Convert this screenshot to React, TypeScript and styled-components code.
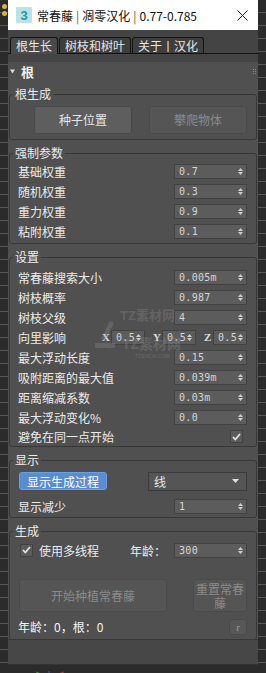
import React from "react";
import styled, { createGlobalStyle } from "styled-components";

const GlobalStyle = createGlobalStyle`
  html, body {
    margin: 0;
    padding: 0;
    background: #2b2b2b;
  }
  body {
    font-family: "Noto Sans CJK SC", "Noto Sans", sans-serif;
    font-size: 12px;
  }
  * {
    box-sizing: border-box;
  }
`;

const Page = styled.div`
  width: 266px;
  height: 673px;
  display: flex;
  overflow: hidden;
  position: relative;
  background: repeating-linear-gradient(
    180deg,
    #2b2b2b 0px,
    #2b2b2b 12px,
    #575757 12px,
    #575757 13px
  );
`;

const SideStrip = styled.div`
  width: 8px;
  display: flex;
  flex-direction: column;
  align-items: center;
  gap: 2px;
  padding-top: 4px;
`;

const Dot = styled.span`
  width: 5px;
  height: 5px;
  border-radius: 50%;
  background: #d6b43a;
`;

const Center = styled.div`
  width: 250px;
  display: flex;
  flex-direction: column;
`;

const Window = styled.div`
  height: 665px;
  background: #474747;
  display: flex;
  flex-direction: column;
  position: relative;
`;

const AxisStrip = styled.div`
  height: 8px;
  background: #2b2b2b;
  padding-left: 20px;
`;

const TitleBar = styled.div`
  height: 30px;
  background: #ffffff;
  display: flex;
  align-items: center;
  padding: 0 10px 0 8px;
  color: #111;
  font-size: 12px;
`;

const TitleText = styled.span`
  margin-left: 5px;
  flex: 1;
  white-space: nowrap;
`;

const Sep = styled.span`
  color: #7a5526;
  margin: 0 3px;
`;

const TabStrip = styled.div`
  height: 32px;
  background: #444444;
  padding-top: 7px;
`;

const TabRow = styled.div`
  display: flex;
  padding-left: 2px;
  border-bottom: 1px solid #141414;
  height: 17px;
`;

const Tab = styled.div<{ $active?: boolean }>`
  height: ${(p) => (p.$active ? "17px" : "16px")};
  padding: 0 5px;
  margin-right: 1px;
  border: 1px solid #141414;
  border-bottom: none;
  border-radius: 3px 3px 0 0;
  background: ${(p) => (p.$active ? "#4a4a4a" : "#3e3e3e")};
  color: #e6e6e6;
  font-size: 12px;
  line-height: 15px;
  white-space: nowrap;
`;

const Panel = styled.div`
  height: 578px;
  background: #505050;
  border-bottom: 1px solid #3a3a3a;
  display: flex;
  flex-direction: column;
  padding: 0 1px;
`;

const RolloutHeader = styled.div`
  height: 20px;
  display: flex;
  align-items: center;
  padding-left: 1px;
  color: #f0f0f0;
  font-weight: bold;
  font-size: 13px;
  gap: 6px;
`;

const Grip = styled.div`
  margin-left: auto;
  margin-right: 1px;
  display: grid;
  grid-template-columns: 1px 1px;
  gap: 1px;
  & > span {
    width: 1px;
    height: 1px;
    background: #8a8a8a;
  }
`;

const Group = styled.fieldset`
  margin: 6px 0 0;
  padding: 0;
  border: 1px solid #383838;
  border-radius: 3px;
  min-inline-size: 0;
`;

const Legend = styled.legend`
  margin-left: 3px;
  padding: 0 2px;
  height: 14px;
  line-height: 14px;
  font-size: 12px;
  color: #ececec;
`;

const GroupBody = styled.div<{ $top?: number; $bottom?: number }>`
  padding: ${(p) => p.$top ?? 2}px 9px ${(p) => p.$bottom ?? 2}px 8px;
  display: flex;
  flex-direction: column;
`;

const Row = styled.div<{ $h?: number; $mt?: number }>`
  height: ${(p) => p.$h ?? 20}px;
  margin-top: ${(p) => p.$mt ?? 0}px;
  display: flex;
  align-items: center;
  justify-content: space-between;
  color: #ececec;
  font-size: 12px;
  white-space: nowrap;
`;

const Label = styled.span``;

const SpinBox = styled.div<{ $w?: number }>`
  width: ${(p) => p.$w ?? 73}px;
  height: 15px;
  background: #5c5c5c;
  border: 1px solid #424242;
  display: flex;
  align-items: center;
  padding: 0 3px 0 4px;
  font-family: "DejaVu Sans Mono", "Liberation Mono", monospace;
  font-size: 10px;
  color: #d4d4d4;
  letter-spacing: 0.3px;
`;

const SpinValue = styled.span`
  flex: 1;
  overflow: hidden;
`;

const Arrows = () => (
  <svg width="5" height="9" viewBox="0 0 5 9">
    <path d="M0 4 L2.5 1 L5 4 Z M0 5 L2.5 8 L5 5 Z" fill="#cdcdcd" />
  </svg>
);

const Spinner: React.FC<{ value: string; width?: number }> = ({
  value,
  width,
}) => (
  <SpinBox $w={width}>
    <SpinValue>{value}</SpinValue>
    <Arrows />
  </SpinBox>
);

const Vector = styled.div`
  display: flex;
  align-items: center;
  gap: 8px;
`;

const AxisPair = styled.div`
  display: flex;
  align-items: center;
`;

const Axis = styled.span`
  width: 9px;
  font-family: "Liberation Serif", serif;
  font-weight: bold;
  font-size: 11px;
  color: #dedede;
`;

const CheckBox = styled.span<{ $mr?: number; $ml?: number }>`
  width: 13px;
  height: 13px;
  background: #5c5c5c;
  border: 1px solid #424242;
  display: inline-flex;
  align-items: center;
  justify-content: center;
  margin-right: ${(p) => p.$mr ?? 0}px;
  margin-left: ${(p) => p.$ml ?? 0}px;
`;

const Check = () => (
  <svg width="9" height="8" viewBox="0 0 9 8">
    <path
      d="M1 4 L3.3 6.5 L8 1"
      stroke="#e4e4e4"
      strokeWidth="1.8"
      fill="none"
    />
  </svg>
);

const ButtonPair = styled.div`
  display: grid;
  grid-template-columns: 98px 98px;
  gap: 17px;
  padding-left: 16px;
`;

const Button = styled.div<{ $disabled?: boolean; $h?: number; $w?: number }>`
  height: ${(p) => p.$h ?? 28}px;
  ${(p) => (p.$w ? `width: ${p.$w}px;` : "")}
  border-radius: 3px;
  background: ${(p) => (p.$disabled ? "#555555" : "#5e5e5e")};
  border: 1px solid ${(p) => (p.$disabled ? "#4a4a4a" : "#484848")};
  color: ${(p) => (p.$disabled ? "#8a8a8a" : "#e6e6e6")};
  display: flex;
  align-items: center;
  justify-content: center;
  text-align: center;
  font-size: 12px;
  line-height: 14px;
`;

const BlueButton = styled.div`
  width: 88px;
  height: 18px;
  margin-left: 1px;
  border-radius: 3px;
  background: #5a8cd2;
  border: 1px solid #6c9ee0;
  color: #ffffff;
  display: flex;
  align-items: center;
  justify-content: center;
  font-size: 12px;
`;

const Dropdown = styled.div`
  width: 99px;
  height: 19px;
  background: #555555;
  border: 1px solid #3c3c3c;
  display: flex;
  align-items: center;
  justify-content: space-between;
  padding: 0 7px 0 5px;
  color: #e6e6e6;
  font-size: 12px;
`;

const TopRow = styled.div`
  height: 18px;
  display: flex;
  align-items: center;
  justify-content: space-between;
  margin-bottom: 6px;
`;

const Left = styled.div`
  display: flex;
  align-items: center;
  gap: 6px;
  color: #ececec;
`;

const AgeRight = styled.div`
  display: flex;
  align-items: center;
  gap: 8px;
  color: #ececec;
`;

const ActionRow = styled.div`
  display: flex;
  justify-content: space-between;
  margin-top: 14px;
  padding-left: 1px;
`;

const StatusRow = styled.div`
  height: 17px;
  margin-top: 6px;
  display: flex;
  align-items: center;
  justify-content: space-between;
  color: #f4f4f4;
  font-size: 12px;
`;

const SmallButton = styled.div`
  width: 18px;
  height: 16px;
  border-radius: 3px;
  background: #575757;
  border: 1px solid #4a4a4a;
  color: #9a9a9a;
  font-family: "Liberation Serif", serif;
  font-size: 11px;
  display: flex;
  align-items: center;
  justify-content: center;
`;

const Footer = styled.div`
  flex: 1;
  background: #474747;
  border-bottom: 1px solid #333;
`;

/* faint site watermark lying over the settings group */
const Watermark = styled.div`
  position: absolute;
  left: 85px;
  top: 309px;
  pointer-events: none;
  color: rgba(150, 150, 150, 0.3);
  display: grid;
  grid-template-columns: 27px auto;
  column-gap: 0;
`;

const WmLogo = styled.div`
  grid-row: 1 / span 3;
  padding-top: 10px;
`;

const WmText = styled.span<{ $size: number; $mt?: number; $ml?: number }>`
  font-size: ${(p) => p.$size}px;
  font-weight: bold;
  line-height: ${(p) => p.$size}px;
  margin-top: ${(p) => p.$mt ?? 0}px;
  margin-left: ${(p) => p.$ml ?? 0}px;
  white-space: nowrap;
  font-family: "Liberation Sans", "Noto Sans CJK SC", sans-serif;
`;

const MaxIcon = () => (
  <svg width="16" height="16" viewBox="0 0 16 16">
    <rect x="0" y="0" width="16" height="16" rx="1" fill="#b9e3e5" />
    <text
      x="8"
      y="13"
      textAnchor="middle"
      fontSize="13"
      fontWeight="bold"
      fontFamily="Liberation Sans, sans-serif"
      fill="#1f9aa2"
    >
      3
    </text>
  </svg>
);

const CloseIcon = () => (
  <svg width="11" height="11" viewBox="0 0 11 11">
    <path d="M0.5 0.5 L10.5 10.5 M10.5 0.5 L0.5 10.5" stroke="#222" />
  </svg>
);

const App: React.FC = () => {
  return (
    <>
      <GlobalStyle />
      <Page>
        <SideStrip>
          <Dot />
          <Dot />
        </SideStrip>
        <Center>
          <Window>
            <TitleBar>
              <MaxIcon />
              <TitleText>
                常春藤<Sep>|</Sep>凋零汉化<Sep>|</Sep>0.77-0.785
              </TitleText>
              <CloseIcon />
            </TitleBar>
            <TabStrip>
              <TabRow>
                <Tab $active>根生长</Tab>
                <Tab>树枝和树叶</Tab>
                <Tab>关于丨汉化</Tab>
              </TabRow>
            </TabStrip>
            <Panel>
              <RolloutHeader>
                <svg width="5" height="5" viewBox="0 0 5 5">
                  <path d="M0 0.5 L5 0.5 L2.5 4.5 Z" fill="#dcdcdc" />
                </svg>
                根
                <Grip>
                  <span />
                  <span />
                  <span />
                  <span />
                  <span />
                  <span />
                </Grip>
              </RolloutHeader>

              <Group>
                <Legend>根生成</Legend>
                <GroupBody $top={5} $bottom={5}>
                  <ButtonPair>
                    <Button>种子位置</Button>
                    <Button $disabled>攀爬物体</Button>
                  </ButtonPair>
                </GroupBody>
              </Group>

              <Group>
                <Legend>强制参数</Legend>
                <GroupBody $top={1} $bottom={2}>
                  <Row>
                    <Label>基础权重</Label>
                    <Spinner value="0.7" />
                  </Row>
                  <Row>
                    <Label>随机权重</Label>
                    <Spinner value="0.3" />
                  </Row>
                  <Row>
                    <Label>重力权重</Label>
                    <Spinner value="0.9" />
                  </Row>
                  <Row>
                    <Label>粘附权重</Label>
                    <Spinner value="0.1" />
                  </Row>
                </GroupBody>
              </Group>

              <Group>
                <Legend>设置</Legend>
                <GroupBody $top={3} $bottom={0}>
                  <Row>
                    <Label>常春藤搜索大小</Label>
                    <Spinner value="0.005m" />
                  </Row>
                  <Row>
                    <Label>树枝概率</Label>
                    <Spinner value="0.987" />
                  </Row>
                  <Row>
                    <Label>树枝父级</Label>
                    <Spinner value="4" />
                  </Row>
                  <Row>
                    <Label>向里影响</Label>
                    <Vector>
                      <AxisPair>
                        <Axis>X</Axis>
                        <Spinner value="0.5" width={34} />
                      </AxisPair>
                      <AxisPair>
                        <Axis>Y</Axis>
                        <Spinner value="0.5" width={34} />
                      </AxisPair>
                      <AxisPair>
                        <Axis>Z</Axis>
                        <Spinner value="0.5" width={34} />
                      </AxisPair>
                    </Vector>
                  </Row>
                  <Row>
                    <Label>最大浮动长度</Label>
                    <Spinner value="0.15" />
                  </Row>
                  <Row>
                    <Label>吸附距离的最大值</Label>
                    <Spinner value="0.039m" />
                  </Row>
                  <Row>
                    <Label>距离缩减系数</Label>
                    <Spinner value="0.03m" />
                  </Row>
                  <Row>
                    <Label>最大浮动变化%</Label>
                    <Spinner value="0.0" />
                  </Row>
                  <Row $h={19}>
                    <Label>避免在同一点开始</Label>
                    <CheckBox $mr={4}>
                      <Check />
                    </CheckBox>
                  </Row>
                </GroupBody>
              </Group>

              <Group>
                <Legend>显示</Legend>
                <GroupBody $top={5} $bottom={1}>
                  <Row $h={18}>
                    <BlueButton>显示生成过程</BlueButton>
                    <Dropdown>
                      线
                      <svg width="7" height="4" viewBox="0 0 7 4">
                        <path d="M0 0 L7 0 L3.5 4 Z" fill="#e0e0e0" />
                      </svg>
                    </Dropdown>
                  </Row>
                  <Row $mt={6}>
                    <Label>显示减少</Label>
                    <Spinner value="1" />
                  </Row>
                </GroupBody>
              </Group>

              <Group>
                <Legend>生成</Legend>
                <GroupBody $top={3} $bottom={4}>
                  <TopRow>
                    <Left>
                      <CheckBox $ml={2}>
                        <Check />
                      </CheckBox>
                      使用多线程
                    </Left>
                    <AgeRight>
                      <Label>年龄：</Label>
                      <Spinner value="300" />
                    </AgeRight>
                  </TopRow>
                  <ActionRow>
                    <Button $disabled $h={33} $w={148}>
                      开始种植常春藤
                    </Button>
                    <Button $disabled $h={33} $w={54}>
                      重置常春
                      <br />藤
                    </Button>
                  </ActionRow>
                  <StatusRow>
                    <span>年龄：0，根：0</span>
                    <SmallButton>r</SmallButton>
                  </StatusRow>
                </GroupBody>
              </Group>
            </Panel>
            <Footer />
            <Watermark>
              <WmLogo>
                <svg width="24" height="32" viewBox="0 0 24 32">
                  <path
                    d="M17 2 L21 4 L12 22 L8 20 Z M2 24 L22 24 L22 29 L2 29 Z"
                    fill="rgba(150,150,150,0.3)"
                  />
                </svg>
              </WmLogo>
              <WmText $size={13}>TZ素材网</WmText>
              <WmText $size={14} $mt={15} $ml={2}>
                TZ素材网
              </WmText>
              <WmText $size={5} $mt={3} $ml={15}>
                TZSUCAI.COM
              </WmText>
            </Watermark>
          </Window>
          <AxisStrip>
            <svg width="40" height="8" viewBox="0 0 40 8">
              <path d="M8 1 L21 6" stroke="#3a9a3a" />
              <path d="M21 0 L21 8" stroke="#3a5ad0" />
              <path d="M21 6 L36 1" stroke="#c03030" />
            </svg>
          </AxisStrip>
        </Center>
        <SideStrip />
      </Page>
    </>
  );
};

export default App;
